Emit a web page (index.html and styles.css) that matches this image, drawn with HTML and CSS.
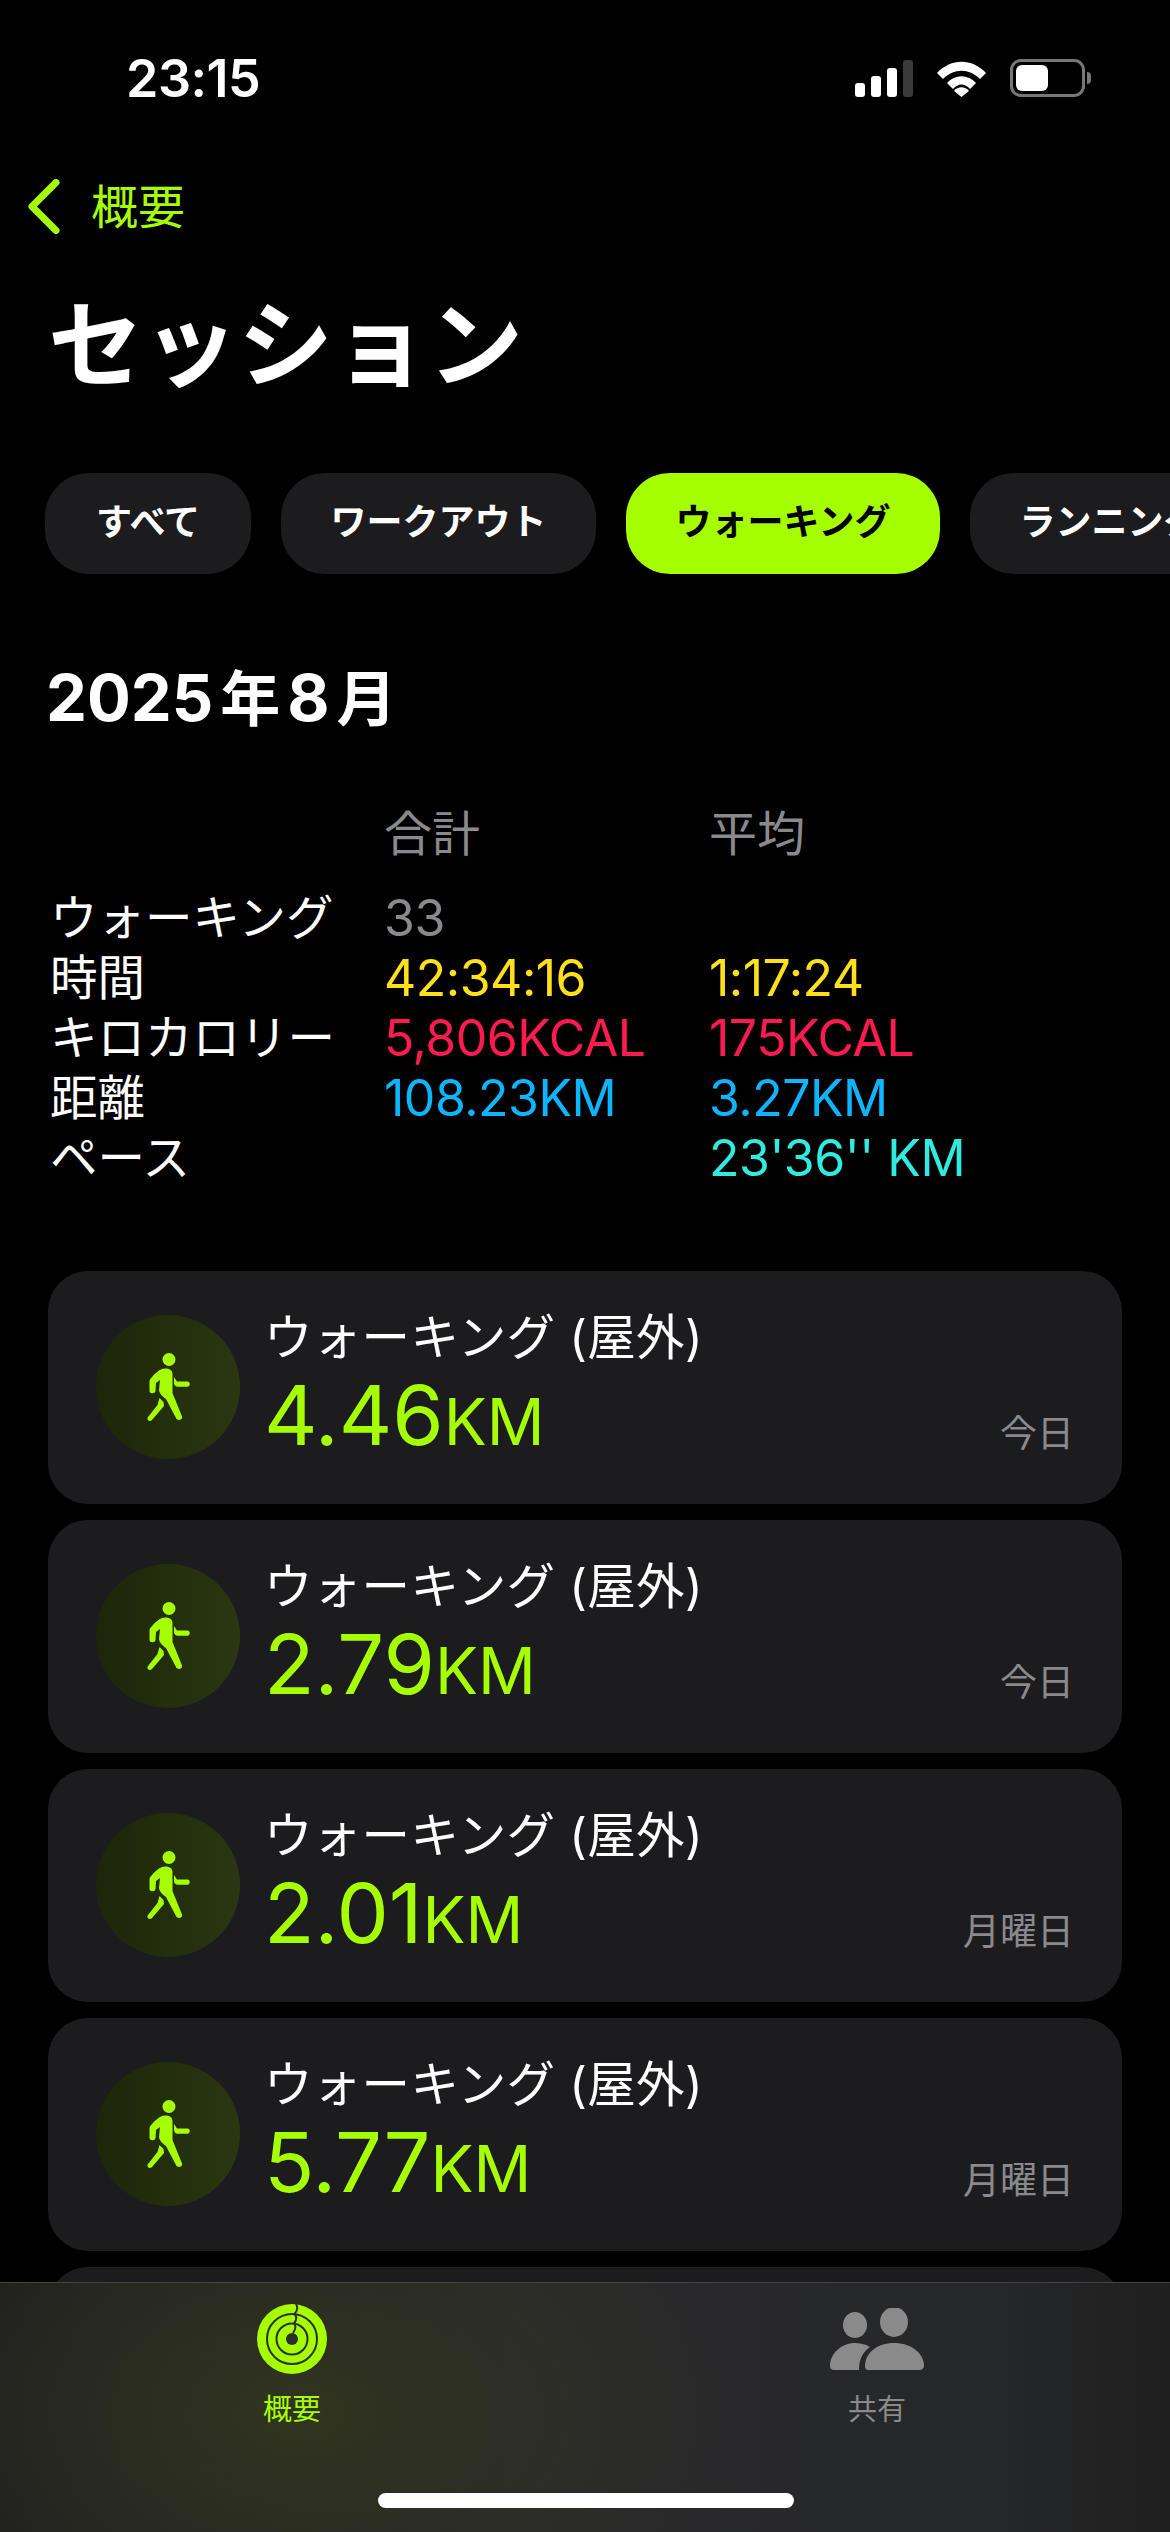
FILE: index.html
```html
<!DOCTYPE html>
<html lang="ja">
<head>
    <meta charset="UTF-8">
    <meta name="viewport" content="width=device-width, initial-scale=1.0">
    <title>セッション</title>
    <link rel="stylesheet" href="styles.css">
</head>
<body>
    <div class="phone">
        <div class="status-bar">
            <span class="time">23:15</span>
            <div class="status-icons">
                <div class="signal">
                    <span class="bar bar-1"></span>
                    <span class="bar bar-2"></span>
                    <span class="bar bar-3"></span>
                    <span class="bar bar-4"></span>
                </div>
                <svg class="wifi" viewBox="0 0 51 37">
                    <path d="M1 13 C15 -2 36 -2 50 13 L44 19 C33 8 18 8 7 19 Z" fill="#fff"/>
                    <path d="M11 23 C19 14 32 14 40 23 L34 29 C29 23 22 23 17 29 Z" fill="#fff"/>
                    <path d="M18 31 C22 26 29 26 33 31 L25.5 37 Z" fill="#fff"/>
                </svg>
                <div class="battery">
                    <div class="battery-body"><span class="battery-fill"></span></div>
                    <span class="battery-tip"></span>
                </div>
            </div>
        </div>

        <div class="back">
            <svg class="chevron" viewBox="0 0 32 55">
                <path d="M28 3.5 L4 27.5 L28 51.5" fill="none" stroke="#a6ff00" stroke-width="7" stroke-linecap="round" stroke-linejoin="round"/>
            </svg>
            <span class="back-label">概要</span>
        </div>

        <h1 class="title">セッション</h1>

        <div class="pills">
            <div class="pill pill-short">すべて</div>
            <div class="pill">ワークアウト</div>
            <div class="pill pill-active">ウォーキング</div>
            <div class="pill">ランニング</div>
        </div>

        <h2 class="month">2025<span class="month-cjk">年</span>8<span class="month-cjk">月</span></h2>

        <div class="stats">
            <div></div>
            <div class="stat-head">合計</div>
            <div class="stat-head">平均</div>

            <div class="stat-label">ウォーキング</div>
            <div class="gray">33</div>
            <div></div>

            <div class="stat-label">時間</div>
            <div class="yellow">42:34:16</div>
            <div class="yellow">1:17:24</div>

            <div class="stat-label">キロカロリー</div>
            <div class="red">5,806KCAL</div>
            <div class="red">175KCAL</div>

            <div class="stat-label">距離</div>
            <div class="blue">108.23KM</div>
            <div class="blue">3.27KM</div>

            <div class="stat-label">ペース</div>
            <div></div>
            <div class="cyan">23'36'' KM</div>
        </div>

        <div class="cards">
            <div class="card">
                <div class="walk-circle">
                    <svg class="walker" viewBox="0 0 43 69"><use href="#walk"/></svg>
                </div>
                <div class="card-text">
                    <div class="card-title">ウォーキング (屋外)</div>
                    <div class="card-value">4.46<span class="unit">KM</span></div>
                </div>
                <div class="card-day">今日</div>
            </div>
            <div class="card">
                <div class="walk-circle">
                    <svg class="walker" viewBox="0 0 43 69"><use href="#walk"/></svg>
                </div>
                <div class="card-text">
                    <div class="card-title">ウォーキング (屋外)</div>
                    <div class="card-value">2.79<span class="unit">KM</span></div>
                </div>
                <div class="card-day">今日</div>
            </div>
            <div class="card">
                <div class="walk-circle">
                    <svg class="walker" viewBox="0 0 43 69"><use href="#walk"/></svg>
                </div>
                <div class="card-text">
                    <div class="card-title">ウォーキング (屋外)</div>
                    <div class="card-value">2.01<span class="unit">KM</span></div>
                </div>
                <div class="card-day">月曜日</div>
            </div>
            <div class="card">
                <div class="walk-circle">
                    <svg class="walker" viewBox="0 0 43 69"><use href="#walk"/></svg>
                </div>
                <div class="card-text">
                    <div class="card-title">ウォーキング (屋外)</div>
                    <div class="card-value">5.77<span class="unit">KM</span></div>
                </div>
                <div class="card-day">月曜日</div>
            </div>
            <div class="card"></div>
        </div>

        <div class="tab-bar">
            <div class="tab tab-active">
                <svg class="rings" viewBox="0 0 70 70">
                    <circle cx="35" cy="35" r="35" fill="#a6ff00"/>
                    <circle cx="35" cy="35" r="25" fill="none" stroke="#2c2f28" stroke-width="2"/>
                    <circle cx="35" cy="35" r="15.5" fill="none" stroke="#2c2f28" stroke-width="2"/>
                    <circle cx="35" cy="35" r="6" fill="#2c2f28"/>
                    <path d="M39 0 C41 3 41 6 37.5 10 C40 13 40 16 37 19.5 C39 22 39 25 36 29" fill="none" stroke="#2c2f28" stroke-width="2"/>
                </svg>
                <span>概要</span>
            </div>
            <div class="tab tab-share">
                <svg class="people" viewBox="0 0 94 62">
                    <ellipse cx="25" cy="17" rx="12" ry="13" fill="#8a8a8a"/>
                    <ellipse cx="64" cy="14" rx="14" ry="15" fill="#8a8a8a"/>
                    <path d="M0 58 C0 45 12 35 25 35 C30 35 35 36 40 39 C33 44 29 51 29 62 L4 62 C1 62 0 60 0 58 Z" fill="#8a8a8a"/>
                    <path d="M35 58 C35 45 47 35 64 35 C81 35 94 45 94 58 C94 60 92 62 90 62 L38 62 C36 62 35 60 35 58 Z" fill="#8a8a8a"/>
                </svg>
                <span>共有</span>
            </div>
            <div class="home-indicator"></div>
        </div>
    </div>

    <svg class="defs" width="0" height="0">
        <symbol id="walk" viewBox="0 0 43 69">
            <circle cx="22" cy="6.5" r="6.5" fill="#a6ff00"/>
            <path d="M14 16.5 C18 14.5 25.5 15.5 25.5 21 L25.5 40 L35 63.5 C36 67 30.5 68.5 29 65 L19 46 C16 44 12.5 41 12 37 L13 27 L9 30 L8.5 38 C8.5 41 2.5 41 2.5 38 L2.5 28 C2.5 26 10 18 14 16.5 Z" fill="#a6ff00"/>
            <path d="M27 24 L30 28.5 L40.5 28.5 C43.5 28.5 43.5 33.7 40.5 33.7 L30.5 33.7 C28.5 33.7 27 32 27 30 Z" fill="#a6ff00"/>
            <path d="M12.5 45 L16.5 49 L17 53 L5 67 C2.5 69.5 -1 66.5 1 64 L10.5 52 Z" fill="#a6ff00"/>
        </symbol>
    </svg>
</body>
</html>
```

FILE: styles.css
```css
* {
    box-sizing: border-box;
}

body {
    margin: 0;
    background-color: #000;
    color: #fff;
    font-family: Inter, "Noto Sans CJK JP", sans-serif;
}

.phone {
    position: relative;
    width: 1170px;
    height: 2532px;
    overflow: hidden;
    background-color: #000;
}

.defs {
    position: absolute;
}

/* status bar */
.status-bar {
    display: flex;
    justify-content: space-between;
    align-items: center;
    height: 128px;
    padding: 28px 79px 0 126px;
}

.time {
    font-size: 52px;
    font-weight: 600;
    letter-spacing: -0.5px;
}

.status-icons {
    display: flex;
    align-items: center;
    gap: 23px;
}

.signal {
    display: flex;
    align-items: flex-end;
    gap: 6px;
    height: 37px;
}

.bar {
    width: 10px;
    border-radius: 3px;
    background-color: #fff;
}

.bar-1 { height: 14px; }
.bar-2 { height: 21px; }
.bar-3 { height: 29px; }
.bar-4 { height: 37px; background-color: #3a3a3a; }

.wifi {
    width: 51px;
    height: 37px;
}

.battery {
    display: flex;
    align-items: center;
    gap: 2px;
}

.battery-body {
    width: 75px;
    height: 38px;
    padding: 3px;
    border: 3px solid #777;
    border-radius: 11px;
}

.battery-fill {
    display: block;
    width: 32px;
    height: 100%;
    border-radius: 6px;
    background-color: #fff;
}

.battery-tip {
    width: 4px;
    height: 12px;
    border-radius: 0 6px 6px 0;
    background-color: #777;
}

/* header */
.back {
    display: flex;
    align-items: center;
    gap: 31px;
    height: 55px;
    margin-top: 51px;
    padding-left: 28px;
    color: #a6ff00;
    font-size: 47px;
}

.back-label {
    margin-top: -6px;
}

.chevron {
    width: 32px;
    height: 55px;
}

.title {
    margin: 46px 0 0 48px;
    font-size: 95px;
    font-weight: 700;
    line-height: 132px;
}

/* filter pills */
.pills {
    display: flex;
    gap: 30px;
    margin-top: 61px;
    padding-left: 45px;
}

.pill {
    flex: none;
    height: 101px;
    padding: 0 49.5px;
    border-radius: 44px;
    background-color: #1c1c1e;
    font-size: 36px;
    font-weight: 700;
    line-height: 99px;
}

.pill-short {
    padding: 0 51px;
}

.pill-active {
    background-color: #a6ff00;
    color: #000;
}

.month {
    margin: 84px 0 0 46px;
    font-size: 65px;
    font-weight: 700;
    line-height: 80px;
}

.month-cjk {
    margin: 0 7px;
    font-size: 60px;
}

/* totals and averages */
.stats {
    display: grid;
    grid-template-columns: 334px 325px 1fr;
    grid-template-rows: 83.5px;
    grid-auto-rows: 60px;
    margin-top: 65px;
    padding-left: 50px;
    font-size: 50px;
    letter-spacing: -0.5px;
    line-height: 60px;
}

.stat-head {
    color: #8a8a8e;
    font-size: 48px;
    letter-spacing: 0;
}

.stat-label {
    color: #fff;
    font-size: 47.5px;
    letter-spacing: 0;
}

.gray { color: #8a8a8e; }
.yellow { color: #ffe01a; }
.red { color: #ff1a50; }
.blue { color: #0db5ff; }
.cyan { color: #30ece0; }

/* session cards */
.cards {
    display: flex;
    flex-direction: column;
    gap: 16px;
    margin-top: 83px;
    padding: 0 48px;
}

.card {
    position: relative;
    display: flex;
    flex: none;
    align-items: center;
    height: 233px;
    padding-left: 48px;
    border-radius: 40px;
    background-color: #1c1c1e;
}

.walk-circle {
    display: flex;
    flex: none;
    justify-content: center;
    align-items: center;
    width: 144px;
    height: 144px;
    margin-right: 24px;
    border-radius: 50%;
    background: linear-gradient(90deg, #1d2608, #2a3712);
}

.walker {
    width: 43px;
    height: 69px;
}

.card-text {
    flex: 1;
    margin-top: 2px;
}

.card-title {
    font-size: 48.5px;
    letter-spacing: 0.3px;
    line-height: 60px;
}

.card-value {
    color: #a6ff00;
    font-size: 83px;
    line-height: 94px;
}

.unit {
    font-size: 64px;
}

.card-day {
    position: absolute;
    right: 48px;
    bottom: 46px;
    color: #8a8a8e;
    font-size: 37px;
}

/* tab bar */
.tab-bar {
    position: absolute;
    left: 0;
    right: 0;
    bottom: 0;
    height: 250px;
    border-top: 1px solid #444;
    background:
        radial-gradient(ellipse 420px 260px at 300px 130px, #30341f, rgba(48, 52, 31, 0)),
        linear-gradient(90deg, #1f1f1f, #2a2a2b 45%, #262729 85%, #1f1f1f);
}

.tab {
    position: absolute;
    top: 21px;
    display: flex;
    flex-direction: column;
    align-items: center;
    width: 200px;
    color: #8a8a8a;
    font-size: 29px;
    line-height: 36px;
}

.tab-active {
    left: 192px;
    color: #a6ff00;
}

.tab-share {
    left: 777px;
}

.rings {
    width: 70px;
    height: 70px;
    margin-bottom: 18px;
}

.people {
    width: 94px;
    height: 62px;
    margin: 4px 0 22px;
}

.home-indicator {
    position: absolute;
    left: 378px;
    bottom: 24px;
    width: 416px;
    height: 15px;
    border-radius: 8px;
    background-color: #fff;
}
```
